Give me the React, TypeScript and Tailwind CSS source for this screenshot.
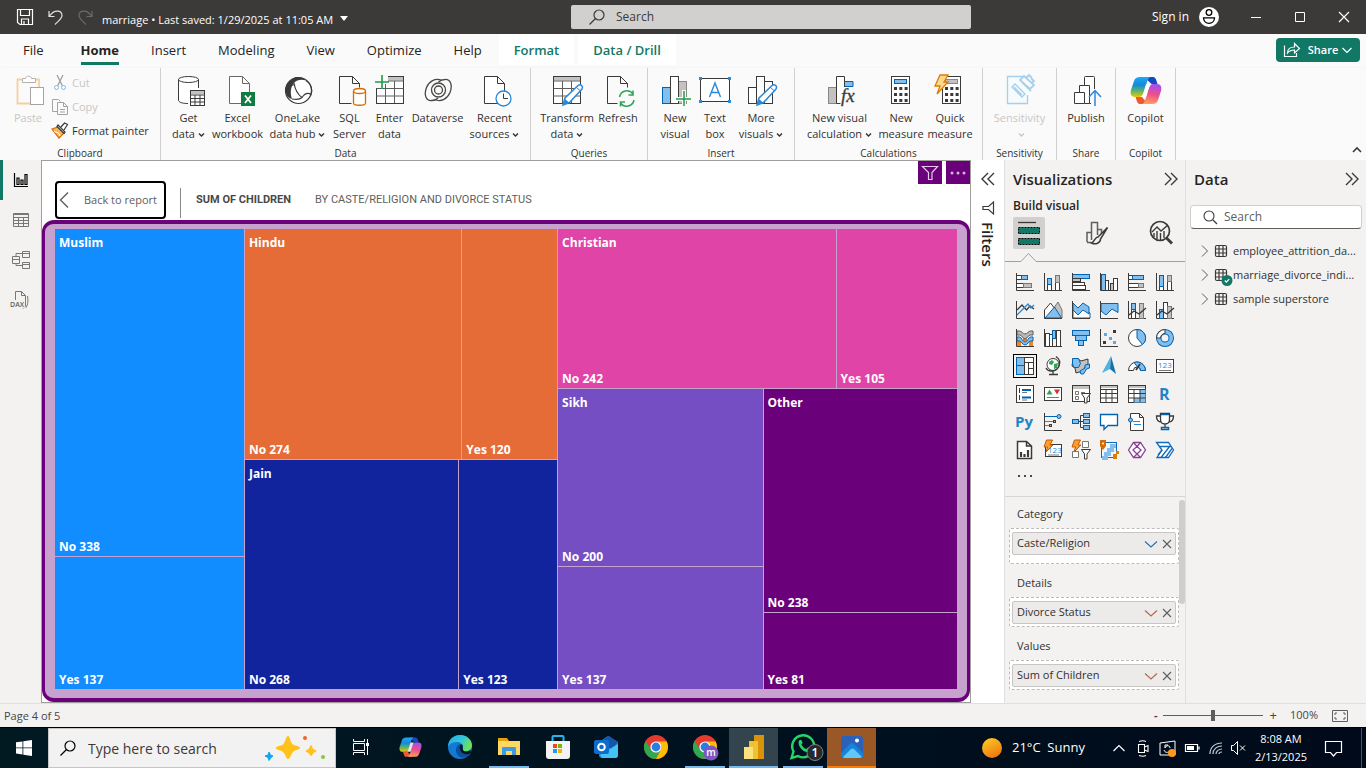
import React, { useState } from "react";
import type { ReactNode } from "react";

const INK = "#3b3a39";
const BLUE = "#83beec";
const LINE = "#0063b1";
const GRAY = "#c4c2c0";

function Icon({ size = 32, children, className = "" }: { size?: number; children: ReactNode; className?: string }) {
  return (
    <svg width={size} height={size} viewBox={`0 0 ${size} ${size}`} fill="none" stroke={INK} className={`shrink-0 overflow-visible ${className}`} aria-hidden="true">
      {children}
    </svg>
  );
}

function Box({ at, fill = "#fff", stroke = INK }: { at: [number, number, number, number]; fill?: string; stroke?: string }) {
  return <rect x={at[0]} y={at[1]} width={at[2]} height={at[3]} fill={fill} stroke={stroke} />;
}

function Chevron({ className = "" }: { className?: string }) {
  return (
    <svg width="7" height="6" viewBox="0 0 7 6" fill="none" stroke="currentColor" strokeWidth="1.4" className={`ml-[3px] inline-block ${className}`} aria-hidden="true">
      <path d="M1 1.500 3.500 4 6 1.500" />
    </svg>
  );
}

/* ---------- Ribbon icons ---------- */

const page = <path d="M5.500 1.500h13l7 7v20h-20zM18.500 1.500v7h7" fill="#fff" />;
const bigGrid = (
  <>
    <rect x="2.500" y="1.500" width="27" height="27" fill="#fff" />
    <rect x="3" y="2" width="26" height="3.500" fill={GRAY} stroke="none" />
    <path d="M2.500 6h27M2.500 13.500h27M2.500 21h27M11.500 6v22M20.500 6v22" stroke="#5f5d5b" />
  </>
);
const pencil = (
  <>
    <path d="M12 30l2-7L27 10.500c3-2 5.500 1 4 3.500L18.500 27.500z" fill="#fff" stroke="#2b88d8" strokeWidth="1.500" />
    <path d="M12 30l2-6 4 3.500z" fill="#2b88d8" stroke="none" />
    <path d="M25.500 12.500l4 3.500" stroke="#2b88d8" />
  </>
);

const ribbonIcons: Record<string, ReactNode> = {
  get: (
    <Icon>
      <path d="M5.500 4.500V25c0 2 3 3.500 8.500 3.500h11V4.500" fill="#fff" stroke="none" />
      <ellipse cx="15.500" cy="4.500" rx="10" ry="3" fill="#fff" />
      <path d="M5.500 4.500V25c0 2 3 3.500 9.500 3.500M25.500 4.500V13" />
      <rect x="17.500" y="15.500" width="14" height="15" fill="#fff" />
      <path d="M18 17.500h13" stroke={GRAY} strokeWidth="3" />
      <path d="M17.500 20h14M17.500 23.500h14M17.500 27h14M22 20v10.500M27 20v10.500" />
    </Icon>
  ),
  excel: (
    <Icon>
      <path d="M7.500 1.500h13l7 7v20h-20zM20.500 1.500v7h7" fill="#fff" stroke="#6b6967" />
      <rect x="19" y="17" width="14" height="14" fill="#107c41" stroke="none" />
      <path d="M23 20.500l6 7.500M29 20.500l-6 7.500" stroke="#fff" strokeWidth="1.800" />
    </Icon>
  ),
  onelake: (
    <Icon>
      <circle cx="16.500" cy="15.500" r="13" fill="#fff" strokeWidth="1.200" />
      <path d="M11 3.500C15 1 21 2 24 5.500c-5-1.500-9-.5-12 2.500-3.500 4-4 10-2 16-4-1-6-4-6.500-8C3 11 6 6 11 3.500z" fill={INK} stroke="none" />
      <path d="M12 8c1 6 3 11 8 14.500M24 5.500c5 3 7 9 5 14-3-2-6.500-.5-9 3M10 24c5 1 8 .5 10-1.500M5 18c1-5 4-8 7.500-8.500" strokeWidth="1.200" />
    </Icon>
  ),
  sql: (
    <Icon>
      <path d="M5.500 28.500v-27h13l7 7v4M18.500 1.500v7h7M5.500 28.500h12" fill="none" />
      <path d="M19.500 16v12c0 3 12 3 12 0V16" fill="#fff" stroke="#d86c00" strokeWidth="1.300" />
      <ellipse cx="25.500" cy="16" rx="6" ry="2.500" fill="#fff" stroke="#d86c00" strokeWidth="1.300" />
    </Icon>
  ),
  enter: (
    <Icon>
      {bigGrid}
      <path d="M0 0h14v9h-6v4H0z" fill="#fafafa" stroke="none" />
      <path d="M8 0v14M1 7h14" stroke="#1f9d49" strokeWidth="1.600" />
    </Icon>
  ),
  dataverse: (
    <Icon>
      <g stroke="#4a4846" strokeWidth="1.300">
        <path d="M20 5.500c-7-3-13 1-15.500 7-3 8 0 13.500 5 13 3 0 5-1 6.500-2.500" />
        <path d="M12.500 24.500c7 3 13-1 15.500-7 3-8 0-13.500-5-13-3 0-5 1-6.500 2.500" />
        <circle cx="16.500" cy="15" r="7" />
        <circle cx="16.500" cy="15" r="4" />
      </g>
    </Icon>
  ),
  recent: (
    <Icon>
      {page}
      <circle cx="24.500" cy="23.500" r="7.500" fill="#fff" stroke="#2b88d8" strokeWidth="1.300" />
      <path d="M24.500 18.500v5H29" />
    </Icon>
  ),
  transform: (
    <Icon>
      {bigGrid}
      {pencil}
    </Icon>
  ),
  refresh: (
    <Icon>
      <path d="M5.500 28.500v-27h13l7 7v4M18.500 1.500v7h7M5.500 28.500h10" />
      <g stroke="#31a354" strokeWidth="1.500">
        <path d="M17.500 22a7.500 7.500 0 0 1 13.500-3v-3.500M31 20h-4.500M32 25a7.500 7.500 0 0 1-13.500 3v3.500M18.500 27H23" />
      </g>
    </Icon>
  ),
  newVisual: (
    <Icon>
      <Box at={[3.500, 12.500, 8, 16]} fill={BLUE} stroke={LINE} />
      <Box at={[19.500, 6.500, 8, 22]} fill={GRAY} stroke="#8a8886" />
      <Box at={[11.500, 1.500, 8, 27]} />
      <path d="M25 15v16M17 24h15" stroke="#fafafa" strokeWidth="4" />
      <path d="M25 16v15M17 24h15" stroke="#1f9d49" strokeWidth="1.500" />
    </Icon>
  ),
  textBox: (
    <Icon>
      <Box at={[1.500, 3.500, 29, 23]} />
      <path d="M10.500 22 16 8l5.500 14M12.500 17.500h7" stroke="#2b88d8" strokeWidth="1.400" />
      <g fill="#2b88d8" stroke="none">
        <rect y="2" width="3" height="3" /><rect x="29" y="2" width="3" height="3" /><rect y="25" width="3" height="3" /><rect x="29" y="25" width="3" height="3" />
      </g>
    </Icon>
  ),
  moreVisuals: (
    <Icon>
      <Box at={[3.500, 12.500, 8, 16]} />
      <Box at={[19.500, 6.500, 8, 22]} />
      <Box at={[11.500, 1.500, 8, 27]} />
      {pencil}
    </Icon>
  ),
  calc: (
    <Icon>
      <Box at={[4.500, 12.500, 8, 16]} fill={GRAY} stroke="#8a8886" />
      <path d="M20 6.500h9v5h-9z" fill={BLUE} stroke={LINE} />
      <path d="M20.500 12V1.500h-8v27h4" fill="#fff" />
      <text x="17" y="27" fontFamily="Liberation Serif, serif" fontStyle="italic" fontSize="19" fill={INK} stroke={INK} strokeWidth=".3">fx</text>
    </Icon>
  ),
  measure: (
    <Icon>
      <Box at={[6.500, 1.500, 18, 27]} />
      <Box at={[9.500, 4.500, 12, 4]} fill={BLUE} stroke={LINE} />
      <path d="M9 13.500h14M9 19.500h14M9 25.500h14" strokeWidth="3" strokeDasharray="3 2.300" />
    </Icon>
  ),
  quick: (
    <Icon>
      <Box at={[8.500, 1.500, 18, 27]} />
      <Box at={[11.500, 4.500, 12, 4]} fill={GRAY} stroke="#8a8886" />
      <path d="M11 13.500h14M11 19.500h14M11 25.500h14" strokeWidth="3" strokeDasharray="3 2.300" />
      <path d="M6 0h8l-4 7h4L3 19l3-8H1z" fill="#ffd98a" stroke="#e07b00" strokeWidth="1.300" />
    </Icon>
  ),
  sensitivity: (
    <Icon>
      <g stroke="#a5d0ec" strokeWidth="1.300">
        <path d="M19 1.500H3.500v27h20V20" fill="#f7fbfe" />
        <path d="M8 12l3-3 10 10-3 3zM10 12l8 8" />
        <path d="M16 5l4-4 10 9-4 4zM22 3l3-3 3 3M27 8l3-2-3-3M18 7l9 9" strokeWidth="1.800" />
      </g>
    </Icon>
  ),
  publish: (
    <Icon>
      <path d="M4.500 28.500v-11h10v11zM9.500 17.500v-7h10v18h-5M14.500 10.500v-8q0-1 1-1h8q1 0 1 1V14M19.500 28.500H21" fill="#fff" />
      <path d="M25 31V16M19 22l6-6.500 6 6.500" stroke="#2b88d8" strokeWidth="1.500" />
    </Icon>
  ),
  copilot: <CopilotLogo size={32} />,
};

function CopilotLogo({ size }: { size: number }) {
  const id = `cp${size}`;
  return (
    <svg width={size} height={size} viewBox="0 0 32 32" aria-hidden="true" className="shrink-0">
      <defs>
        <linearGradient id={`${id}a`} x1="0" y1="0" x2="0" y2="1"><stop offset="0" stopColor="#1baaf2" /><stop offset=".4" stopColor="#1688dc" /><stop offset=".7" stopColor="#5bb567" /><stop offset="1" stopColor="#f6c500" /></linearGradient>
        <linearGradient id={`${id}b`} x1=".6" y1="0" x2=".4" y2="1"><stop offset="0" stopColor="#a04ff0" /><stop offset=".5" stopColor="#ee4f8c" /><stop offset="1" stopColor="#ffa15c" /></linearGradient>
      </defs>
      <path d="M14 2h9c2 0 3 2 3.500 4l1 3h-6z" fill="#1748c4" />
      <path d="M18 29H10c-2 0-3-2-3.500-4L5.500 22H12z" fill="#ec5a34" />
      <path d="M10 2h11c-2 0-3 2-4 5l-3 10c-1 3-2 5-5 5H5c-4 0-5-3-4-7L4 6c1-3 3-4 6-4z" fill={`url(#${id}a)`} />
      <path d="M22 29H11.500c2 0 3-2 4-5l3-10c1-3 2-5 5-5H27c4 0 5 3 4 7l-3 9c-1 3-3 4-6 4z" fill={`url(#${id}b)`} />
      <path d="M16 9h5c-1.500 1.500-2 4-3 7s-1 4-2 6h-5c2-2 2.500-5 3.500-8z" fill="#fff" opacity=".9" />
    </svg>
  );
}

type Command = { icon: string; lines: string[]; width: string; menu?: boolean; disabled?: boolean };
type Group = { label: string; width: string; commands: Command[] };

const groups: Group[] = [
  {
    label: "Data", width: "w-[370px]",
    commands: [
      { icon: "get", lines: ["Get", "data"], width: "w-[42px]", menu: true },
      { icon: "excel", lines: ["Excel", "workbook"], width: "w-14" },
      { icon: "onelake", lines: ["OneLake", "data hub"], width: "w-16", menu: true },
      { icon: "sql", lines: ["SQL", "Server"], width: "w-10" },
      { icon: "enter", lines: ["Enter", "data"], width: "w-10" },
      { icon: "dataverse", lines: ["Dataverse"], width: "w-14" },
      { icon: "recent", lines: ["Recent", "sources"], width: "w-[58px]", menu: true },
    ],
  },
  {
    label: "Queries", width: "w-[117px]",
    commands: [
      { icon: "transform", lines: ["Transform", "data"], width: "w-[58px]", menu: true },
      { icon: "refresh", lines: ["Refresh"], width: "w-11" },
    ],
  },
  {
    label: "Insert", width: "w-[147px]",
    commands: [
      { icon: "newVisual", lines: ["New", "visual"], width: "w-10" },
      { icon: "textBox", lines: ["Text", "box"], width: "w-10" },
      { icon: "moreVisuals", lines: ["More", "visuals"], width: "w-[52px]", menu: true },
    ],
  },
  {
    label: "Calculations", width: "w-[188px]",
    commands: [
      { icon: "calc", lines: ["New visual", "calculation"], width: "w-[74px]", menu: true },
      { icon: "measure", lines: ["New", "measure"], width: "w-[49px]" },
      { icon: "quick", lines: ["Quick", "measure"], width: "w-[49px]" },
    ],
  },
  { label: "Sensitivity", width: "w-[74px]", commands: [{ icon: "sensitivity", lines: ["Sensitivity", ""], width: "w-15", menu: true, disabled: true }] },
  { label: "Share", width: "w-[59px]", commands: [{ icon: "publish", lines: ["Publish"], width: "w-12" }] },
  { label: "Copilot", width: "w-[60px]", commands: [{ icon: "copilot", lines: ["Copilot"], width: "w-12" }] },
];

function RibbonCommand({ c }: { c: Command }) {
  return (
    <button disabled={c.disabled} className={`flex flex-col items-center ${c.width} ${c.disabled ? "text-[#c8c6c4]" : "text-[#323130]"}`}>
      {ribbonIcons[c.icon]}
      <span className="mt-[3px] flex flex-col items-center text-[11px] leading-4 whitespace-nowrap">
        {c.lines.map((line, i) => (
          <span key={i} className="h-4">
            {line}
            {c.menu && i === c.lines.length - 1 && <Chevron />}
          </span>
        ))}
      </span>
    </button>
  );
}

function RibbonGroup({ g }: { g: Group }) {
  return (
    <section className={`flex shrink-0 flex-col items-center justify-between border-r border-[#d2d0ce] pb-px ${g.width}`}>
      <div className="flex items-start pt-[7px]">
        {g.commands.map((c) => <RibbonCommand key={c.icon} c={c} />)}
      </div>
      <h2 className="text-[10px] leading-[12px] text-[#323130]">{g.label}</h2>
    </section>
  );
}

function Clipboard() {
  return (
    <section className="flex w-[161px] shrink-0 flex-col justify-between border-r border-[#d2d0ce] pb-px">
      <div className="flex pt-[3px]">
        <button disabled className="ml-[11px] flex w-[34px] flex-col items-center pt-1 text-[#c8c6c4]">
          <Icon>
            <path d="M10 4.500H5.500v24H18M24 4.500h3V12" fill="none" stroke="#f5cf9d" strokeWidth="1.800" />
            <path d="M10.500 7.500v-4h3c0-3 6-3 6 0h4v4z" fill="#fff" stroke="#b3b1af" />
            <Box at={[18.500, 12.500, 13, 17]} stroke="#a6a4a2" />
          </Icon>
          <span className="mt-[3px] text-[11px] leading-4">Paste</span>
        </button>
        <div className="ml-[7px] flex flex-col text-[11px]">
          <button disabled className="flex h-6 items-center gap-1 text-[#c8c6c4]">
            <Icon size={16}>
              <path d="M5 0l5.500 11M11 0L5.500 11" stroke="#9c9a98" strokeWidth="1.200" />
              <circle cx="4.500" cy="12.500" r="2" stroke="#83beec" /><circle cx="11.500" cy="12.500" r="2" stroke="#83beec" />
            </Icon>
            Cut
          </button>
          <button disabled className="flex h-6 items-center gap-1 text-[#c8c6c4]">
            <Icon size={16}>
              <path d="M5 12.500H.5V.5h6l2 2M5.500 3.500h6l4 4v8h-10zM11.500 3.500v4h4M8 10.500h5M8 13h5" stroke="#a6a4a2" />
            </Icon>
            Copy
          </button>
          <button className="flex h-6 items-center gap-1 whitespace-nowrap text-[#323130]">
            <Icon size={16}>
              <path d="M0 6l6-2 6 6-5 5z" fill="#fbb553" stroke="#d86c00" strokeWidth="1.200" />
              <path d="M2 8.500l4.500 1.500L8 13" stroke="#fff" />
              <path d="M5 3.500l7 7 1-1.500-7-7zM9 4l3.500-4 3 1.500L12 7" fill="#fff" strokeWidth="1.200" />
            </Icon>
            Format painter
          </button>
        </div>
      </div>
      <h2 className="text-center text-[10px] leading-[12px] text-[#323130]">Clipboard</h2>
    </section>
  );
}

/* ---------- Treemap ---------- */

type Caste = { name: string; no: number; yes: number; color: string; dir: "flex-row" | "flex-col" };
const castes: Record<string, Caste> = {
  muslim: { name: "Muslim", no: 338, yes: 137, color: "bg-[#118dff]", dir: "flex-col" },
  hindu: { name: "Hindu", no: 274, yes: 120, color: "bg-[#e66c37]", dir: "flex-row" },
  jain: { name: "Jain", no: 268, yes: 123, color: "bg-[#12239e]", dir: "flex-row" },
  christian: { name: "Christian", no: 242, yes: 105, color: "bg-[#e044a7]", dir: "flex-row" },
  sikh: { name: "Sikh", no: 200, yes: 137, color: "bg-[#744ec2]", dir: "flex-col" },
  other: { name: "Other", no: 238, yes: 81, color: "bg-[#6b007b]", dir: "flex-col" },
};
const total = (...list: Caste[]) => list.reduce((sum, c) => sum + c.no + c.yes, 0);

function Tile({ c }: { c: Caste }) {
  return (
    <div className={`flex min-h-0 min-w-0 basis-0 gap-px ${c.dir}`} style={{ flexGrow: total(c) }}>
      <div className={`flex min-h-0 min-w-0 basis-0 flex-col justify-between ${c.color}`} style={{ flexGrow: c.no }}>
        <span className="pt-[5px] pl-1">{c.name}</span>
        <span className="pl-1">No {c.no}</span>
      </div>
      <div className={`flex min-h-0 min-w-0 basis-0 flex-col justify-end ${c.color}`} style={{ flexGrow: c.yes }}>
        <span className="pl-1">Yes {c.yes}</span>
      </div>
    </div>
  );
}

function Treemap() {
  const { muslim, hindu, jain, christian, sikh, other } = castes;
  return (
    <div className="flex min-h-0 flex-1 rounded-xl border-x-[3px] border-y-4 border-[#6b007b] bg-[#c8a2cf] px-[10px] pt-[5px] pb-[9px]">
      <div className="flex min-w-0 flex-1 gap-px text-[12px] leading-[18px] font-bold whitespace-nowrap text-white">
        <div className="flex min-w-0 basis-0" style={{ flexGrow: total(muslim) }}><Tile c={muslim} /></div>
        <div className="flex min-w-0 basis-0 flex-col gap-px" style={{ flexGrow: total(hindu, jain) }}>
          <Tile c={hindu} />
          <Tile c={jain} />
        </div>
        <div className="flex min-w-0 basis-0 flex-col gap-px" style={{ flexGrow: total(christian, sikh, other) }}>
          <Tile c={christian} />
          <div className="flex min-h-0 basis-0 gap-px" style={{ flexGrow: total(sikh, other) }}>
            <Tile c={sikh} />
            <Tile c={other} />
          </div>
        </div>
      </div>
    </div>
  );
}

function Canvas() {
  return (
    <main className="flex min-w-0 flex-1 flex-col border border-[#a19f9d] bg-white">
      <div className="flex h-[59px] shrink-0 items-start">
        <button className="mt-5 ml-[13px] flex h-[38px] w-[111px] shrink-0 items-center rounded-[4px] border-2 border-black pl-[2px] text-[11px] whitespace-nowrap text-[#605e5c]">
          <Icon size={10} className="mr-[15px]"><path d="M9-2.500 1.500 5 9 12.500" stroke="#605e5c" strokeWidth="1.400" /></Icon>
          Back to report
        </button>
        <div className="mt-[27px] ml-[14px] h-[30px] w-px bg-[#8a8886]" />
        <h1 className="mt-[31px] ml-[15px] flex gap-6 font-[Roboto,sans-serif] text-[11px] leading-4 whitespace-nowrap text-[#605e5c]">
          <span className="font-bold text-[#4a4846]">SUM OF CHILDREN</span>
          <span>BY CASTE/RELIGION AND DIVORCE STATUS</span>
        </h1>
        <div className="ml-auto flex gap-1">
          <button aria-label="Filters on visual" className="flex h-[23px] w-6 items-center justify-center bg-[#6b007b]">
            <Icon size={16}><path d="M.5 1.500h15l-5.500 6v7H6.500v-7z" stroke="#e3cbe8" strokeWidth="1.200" /></Icon>
          </button>
          <button aria-label="More options" className="flex h-[23px] w-6 items-center justify-center bg-[#6b007b]">
            <svg width="16" height="4" viewBox="0 0 16 4" fill="#d5b3dc"><circle cx="2" cy="2" r="1.500" /><circle cx="8" cy="2" r="1.500" /><circle cx="14" cy="2" r="1.500" /></svg>
          </button>
        </div>
      </div>
      <Treemap />
    </main>
  );
}

/* ---------- Visualization gallery ---------- */

const axis = <path d="M.5 0v17.500H18" />;
const bolt = <path d="M2.500-1h6L6 4h3L2 11l1.500-5H0z" fill="#ff9d2e" stroke="#c25a00" />;
const funnel = <path d="M9.500 8.500h9L15 13v5h-2.500v-5z" fill="#fff" />;

const visuals: [string, ReactNode][] = [
  ["Stacked bar chart", <>{axis}<Box at={[.5, 2.500, 5, 4]} /><Box at={[5.500, 2.500, 6, 4]} fill={BLUE} stroke={LINE} /><Box at={[.5, 10.500, 7, 4]} /><Box at={[7.500, 10.500, 8, 4]} fill={GRAY} stroke="#797775" /></>],
  ["Stacked column chart", <>{axis}<Box at={[3.500, 11.500, 4, 6]} /><Box at={[3.500, 5.500, 4, 6]} fill={BLUE} stroke={LINE} /><Box at={[11.500, 9.500, 4, 8]} /><Box at={[11.500, 2.500, 4, 7]} fill={GRAY} stroke="#797775" /></>],
  ["Clustered bar chart", <><Box at={[.5, 1.500, 17, 4]} fill={BLUE} stroke={LINE} /><Box at={[.5, 5.500, 8, 3]} fill={GRAY} /><Box at={[.5, 9.500, 12, 3]} /><Box at={[.5, 12.500, 13, 4]} />{axis}</>],
  ["Clustered column chart", <><Box at={[1.500, 1.500, 4, 16]} fill={BLUE} stroke={LINE} /><Box at={[5.500, 7.500, 3, 10]} /><Box at={[10.500, 10.500, 3, 7]} fill={GRAY} /><Box at={[13.500, 5.500, 4, 12]} />{axis}</>],
  ["100% stacked bar chart", <>{axis}<Box at={[.5, 2.500, 4, 4]} /><Box at={[4.500, 2.500, 11, 4]} fill={BLUE} stroke={LINE} /><Box at={[.5, 10.500, 10, 4]} /><Box at={[10.500, 10.500, 5, 4]} fill={GRAY} stroke="#797775" /></>],
  ["100% stacked column chart", <>{axis}<Box at={[3.500, 13.500, 4, 4]} /><Box at={[3.500, 2.500, 4, 11]} fill={BLUE} stroke={LINE} /><Box at={[11.500, 8.500, 4, 9]} /><Box at={[11.500, 2.500, 4, 6]} fill={GRAY} stroke="#797775" /></>],
  ["Line chart", <>{axis}<path d="M1 9l5-5 4.500 5L14 5l4 3" strokeWidth="1.300" /><path d="M1 14l5-5 6-6 3 4 3-3" stroke="#2b88d8" strokeWidth="1.300" /></>],
  ["Area chart", <><path d="M9 8l5-7 4 8v8h-8z" fill={GRAY} stroke="#797775" /><path d="M.5 9l6-7 6 8v7H.5z" fill="#fff" /><path d="M1 17l9.500-11 7 11z" fill={BLUE} stroke={LINE} /><path d="M.5 9v8.500H18" /></>],
  ["Stacked area chart", <><path d="M1 8l5 3 5-5 7 6v5H1z" fill="#fff" stroke={LINE} /><path d="M1 2l5 5 5-5 6 4v7l-6-4-5 5-5-5z" fill={BLUE} stroke={LINE} />{axis}</>],
  ["100% stacked area chart", <><path d="M1 2.500h17v9L12 8l-6 6-5-4z" fill={BLUE} stroke={LINE} />{axis}</>],
  ["Line and stacked column chart", <>{axis}<Box at={[3.500, 8.500, 4, 9]} /><Box at={[3.500, 2.500, 4, 6]} fill={BLUE} stroke={LINE} /><Box at={[11.500, 2.500, 4, 15]} fill={GRAY} stroke="#797775" /><path d="M1 14l5-4 5 3 7-6" strokeWidth="1.400" /></>],
  ["Line and clustered column chart", <>{axis}<Box at={[3.500, 8.500, 4, 9]} fill={BLUE} stroke={LINE} /><Box at={[7.500, 1.500, 4, 16]} /><Box at={[11.500, 5.500, 4, 12]} fill={GRAY} stroke="#797775" /><path d="M1 14l5-4 5 3 7-6" strokeWidth="1.400" /></>],
  ["Ribbon chart", <><path d="M1 12h4v5H1zM13 12h4v5h-4zM7 8h4v4H7z" fill="#f58220" stroke="none" /><path d="M1 2h2.500c2 0 3.500 3 5.500 3s3.500-3 5.500-3H17v4h-2.500C12 6 11 10 9 10S6 6 3.500 6H1z" fill="#b9b7b5" stroke="#5f5d5b" /><path d="M1 8h2.500c2 0 3 5 5.500 5s3.500-5 5.500-5H17v4h-2.500c-2 0-3 4-5.500 4s-3.500-4-5.500-4H1z" fill={BLUE} stroke={LINE} />{axis}</>],
  ["Waterfall chart", <>{axis}<Box at={[1.500, 4.500, 4, 13]} /><Box at={[5.500, 5.500, 3, 12]} /><Box at={[8.500, 1.500, 3, 8]} fill={BLUE} stroke={LINE} /><Box at={[12.500, 1.500, 4, 16]} /></>],
  ["Funnel", <><Box at={[.5, 1.500, 17, 5]} fill={BLUE} stroke={LINE} /><Box at={[3.500, 6.500, 11, 5]} fill={BLUE} stroke={LINE} /><Box at={[6.500, 11.500, 5, 5]} fill={BLUE} stroke={LINE} /></>],
  ["Scatter chart", <>{axis}<path d="M3 12h3v3H3zM13 1h3v3h-3z" fill={INK} stroke="none" /><path d="M4 4h3v3H4zM9 8h3v3H9zM13 12h3v3h-3z" fill="#5ea9e0" stroke="none" /></>],
  ["Pie chart", <><circle cx="9" cy="9" r="8.500" fill="#fff" /><path d="M9 9V.5A8.500 8.500 0 0 1 14.500 15.500z" fill={BLUE} stroke={LINE} /></>],
  ["Donut chart", <><circle cx="9" cy="9" r="6.300" stroke={LINE} strokeWidth="5.500" /><circle cx="9" cy="9" r="6.300" stroke={BLUE} strokeWidth="3.500" /><path d="M.5 9A8.500 8.500 0 0 1 9 .5v4A4.500 4.500 0 0 0 4.500 9z" fill="#fff" /></>],
  ["Treemap", <><Box at={[.5, .5, 8, 8]} fill={BLUE} stroke={LINE} /><Box at={[.5, 8.500, 8, 9]} fill={BLUE} stroke={LINE} /><Box at={[8.500, .5, 9, 5]} /><Box at={[8.500, 5.500, 4, 12]} /><Box at={[12.500, 5.500, 5, 6]} /><Box at={[12.500, 11.500, 5, 6]} /></>],
  ["Map", <><circle cx="9" cy="7.500" r="6" fill="#fff" /><path d="M5 5l3-2 2 2-2 3-3-1zM10 7l4-1-1 5-3 1z" fill="#31a354" stroke="none" /><path d="M12-.5c7 5 3 15-5 14.500-3 0-4-1-5-3M9 14v3M5 17.500h9" strokeWidth="1.300" /></>],
  ["Filled map", <><path d="M1 2h5l3 2 7-2v6l-3 2-2 6-4-1-3 1-1-5-3-2z" fill={GRAY} /><path d="M.5 1.500h6l2 5-2 4H2L.5 7zM17.500 7v4l-3 1-3 5H9l-1-3 5-3V8z" fill={BLUE} stroke={LINE} /></>],
  ["Azure map", <><path d="M11-1L2 16l8-4z" fill="#4fb3e0" stroke="none" /><path d="M11-1l5 18-6-5z" fill="#1672a8" stroke="none" /></>],
  ["Gauge", <><path d="M.5 13.500a8.500 8.500 0 0 1 17 0h-5a3.500 3.500 0 0 0-7 0z" fill="#fff" /><path d="M6 5.500c6-2 11 2 11.500 8h-5c0-2-1-3.500-3-3.500z" fill={BLUE} stroke={LINE} /><path d="M8 13l4-6" strokeWidth="1.800" /></>],
  ["Card", <><Box at={[.5, 2.500, 17, 13]} /><text x="2" y="11" fontFamily="Open Sans, sans-serif" fontSize="8" fill="#2b88d8" stroke="none">123</text><path d="M3 13.500h12" stroke="#797775" /></>],
  ["Multi-row card", <><Box at={[.5, .5, 17, 17]} /><path d="M3.500 3v5M3.500 10v5" /><path d="M6 5h9M6 12.500h9" stroke={LINE} strokeWidth="1.800" /><path d="M6 7.500h5M6 15h5" stroke="#797775" /></>],
  ["KPI", <><Box at={[.5, 2.500, 17, 13]} /><path d="M2.500 9.500h6l-3-5z" fill="#31a354" stroke="none" /><path d="M10 4.500h6l-3 5z" fill="#d13438" stroke="none" /><path d="M3 12.500h12" stroke="#797775" /></>],
  ["Slicer", <><Box at={[.5, .5, 17, 16]} /><path d="M1 2.500h16" stroke={GRAY} strokeWidth="3" /><path d="M3.500 6.500h3v3h-3zM3.500 11.500h3v3h-3zM9 7.500h4" stroke="#797775" />{funnel}</>],
  ["Table", <><Box at={[.5, .5, 17, 17]} /><path d="M1 2h16" stroke={GRAY} strokeWidth="2" /><path d="M.5 4.500h17M.5 8.500h17M.5 13h17M6 4v13M12 4v13" /></>],
  ["Matrix", <><Box at={[.5, .5, 17, 17]} /><path d="M12 4h5.500v13.500H6V13h6z" fill={BLUE} stroke="none" /><path d="M1 2h16" stroke={GRAY} strokeWidth="2" /><path d="M.5 4.500h17M.5 8.500h17M.5 13h17M6 4v13M12 4v13" /></>],
  ["R script visual", <text x="3" y="15" fontFamily="Open Sans, sans-serif" fontWeight="700" fontSize="16" fill="#2284c5" stroke="none">R</text>],
  ["Python visual", <text x="-1" y="14" fontFamily="Open Sans, sans-serif" fontWeight="700" fontSize="15" fill="#2284c5" stroke="none">Py</text>],
  ["Key influencers", <>{axis}<path d="M1 3.500h12" stroke={LINE} /><path d="M1 8.500h8M1 12.500h5" stroke="#797775" /><circle cx="15" cy="3.500" r="2" fill={BLUE} stroke={LINE} /><Box at={[9.500, 7.500, 2, 2]} fill={GRAY} /><Box at={[5.500, 11.500, 2, 2]} fill={GRAY} /></>],
  ["Decomposition tree", <><path d="M6 8.500h5M8.500 2.500v12M8.500 2.500H12M8.500 14.500H12" /><Box at={[.5, 6.500, 6, 4]} fill={BLUE} stroke={LINE} /><Box at={[11.500, .5, 6, 4]} fill={BLUE} stroke={LINE} /><Box at={[11.500, 6.500, 6, 4]} fill={BLUE} stroke={LINE} /><Box at={[11.500, 12.500, 6, 4]} fill={BLUE} stroke={LINE} /></>],
  ["Q&A", <path d="M.5 1.500h17v11H8l-4 4v-4H.5z" fill="#fff" stroke={LINE} strokeWidth="1.300" />],
  ["Narrative", <><path d="M2.500.5h9l4 4v13h-13zM11.500.5v4h4" fill="#fff" /><path d="M5 8.500h7M6 11.500h7" stroke="#2b88d8" /><circle cx="2.500" cy="7" r="2" fill={BLUE} stroke={LINE} /></>],
  ["Metrics", <><path d="M4.500.5h9v6c0 6-9 6-9 0zM4.500 3H.5c0 4 2 6 5 6M13.500 3h4c0 4-2 6-5 6M9 11v4" fill="#fff" strokeWidth="1.300" /><path d="M5 1.500h8M5.500 16.500h7v-2h-7z" stroke={LINE} strokeWidth="1.500" /></>],
  ["Paginated report", <><path d="M1.500.5h9l5 4.500v12.500h-14zM10.500.5V5h5" fill="#fff" strokeWidth="1.500" /><path d="M5 16v-5M8.500 16v-3M12 16V9" strokeWidth="2.200" /></>],
  ["Card (new)", <><Box at={[1.500, 3.500, 16, 12]} /><text x="4" y="12" fontFamily="Open Sans, sans-serif" fontSize="8" fill="#2b88d8" stroke="none">123</text><path d="M4 14h11" stroke="#797775" />{bolt}</>],
  ["Slicer (new)", <><path d="M10.500.5h6v6h-6zM.5 10.500h6v6h-6z" fill="#fff" stroke="#797775" />{funnel}{bolt}</>],
  ["ArcGIS", <><Box at={[1.500, 1.500, 15, 15]} fill="#eef7fd" stroke="#0f6cbd" /><path d="M16 5h-4v4H9v4H6v4H2" stroke={BLUE} strokeWidth="4" /><path d="M0-1h6v6l-3 4-3-4z" fill="#d86c00" stroke="none" /><circle cx="3" cy="2.500" r="1" fill="#fff" stroke="none" /><path d="M13 13h4v5h-4zM16 10h3v3h-3z" fill="#e07b00" stroke="none" /></>],
  ["Power Apps", <g stroke="#8a3f96" strokeWidth="1.300"><path d="M.5 9L5.500 1.500h7l5 7.500-5 7.500h-7z" fill="#fff" /><path d="M5.500 1.500L9 5.500 5 9l4 4-3.500 3.500M12.500 1.500L9 5.500 13 9l-4 4 3.500 3.500M9 5.500" /></g>],
  ["Power Automate", <g stroke="#0f6cbd" strokeWidth="1.300"><path d="M.5 1.500h12l5 7.500-5 7.500H1L6 9z" fill="#fff" /><path d="M3 5.500h12M5 16.500l9-11.500M9.500 16.500l6.500-9M2 14l4-5" /></g>],
];

function Wells({ label, field, tall }: { label: string; field: string; tall?: boolean }) {
  return (
    <section className="text-[11px] text-[#323130]">
      <h3 className="pl-2 leading-[28px]">{label}</h3>
      <div className={`rounded-[2px] border border-dashed border-[#bdbbb9] bg-white p-[2px] pt-[3px] ${tall ? "h-9" : "h-[30px]"}`}>
        <div className="flex h-[23px] items-center rounded-[2px] border border-[#c8c6c4] bg-[#edebe9] pr-[3px] pl-1">
          <span className="flex-1">{field}</span>
          <button aria-label={`${field} options`}><Icon size={14} className="mr-1"><path d="M1 4.500l6 5.500 6-5.500" stroke={tall ? "#2b6cb0" : "#b5654a"} strokeWidth="1.100" /></Icon></button>
          <button aria-label={`Remove ${field}`}><Icon size={10}><path d="M1 1l8 8M9 1L1 9" stroke="#605e5c" strokeWidth="1.100" /></Icon></button>
        </div>
      </div>
    </section>
  );
}

function Collapse({ left = false, label }: { left?: boolean; label: string }) {
  return (
    <button aria-label={label}>
      <Icon size={14}><path d={left ? "M7 1 1 7l6 6M13 1 7 7l6 6" : "M1 1l6 6-6 6M7 1l6 6-6 6"} strokeWidth="1.400" /></Icon>
    </button>
  );
}

function Visualizations() {
  return (
    <aside className="flex w-[182px] shrink-0 flex-col border-x border-[#e1dfdd] bg-[#f3f2f1]">
      <header className="flex h-[38px] items-center justify-between pr-[7px] pl-2">
        <h2 className="text-[15px] font-semibold text-[#252423]">Visualizations</h2>
        <Collapse label="Collapse visualizations" />
      </header>
      <h3 className="pl-2 text-[12px] leading-4 font-semibold text-[#252423]">Build visual</h3>
      <div className="mt-[3px] flex items-center justify-between pr-3 pl-2">
        <button aria-label="Build visual" className="flex size-8 items-center justify-center rounded-[2px] bg-[#d2d0ce]">
          <Icon size={24}>
            <path d="M1 1.500h18" strokeWidth="1.300" />
            <path d="M1.500 6.500h21v6h-21zM1.500 17.500h21v6h-21z" fill="#117865" strokeDasharray="2 1" stroke="#000" />
          </Icon>
        </button>
        <button aria-label="Format visual">
          <Icon size={24}>
            <path d="M2 21v-9.500h4.500V1.500h6v7h4v5M2 21.500h4M6.500 11v8M12.500 8v6" stroke="#605e5c" strokeWidth="1.500" />
            <path d="M22.500 6.500L13 16c-3 0-3 4-6.500 6 4 2 9 0 9-4z" fill="#f3f2f1" strokeWidth="1.500" />
          </Icon>
        </button>
        <button aria-label="Analytics">
          <Icon size={24}>
            <circle cx="11" cy="10" r="9.500" strokeWidth="1.700" />
            <path d="M3 11l5-5 4 4 7-6M5 12v4M8 10v8M11.500 12v7M15 10v7" strokeWidth="1.400" />
            <path d="M17 16.500l6 6" strokeWidth="2.800" />
          </Icon>
        </button>
      </div>
      <svg width="180" height="14" viewBox="0 0 180 14" fill="none" stroke="#a19f9d" aria-hidden="true"><path d="M0 12.500h16l7.500-8 7.500 8h149" /></svg>
      <div className="grid grid-cols-6 self-start pt-[5px] pl-[6px]">
        {visuals.map(([name, art]) => (
          <button key={name} aria-label={name} className="flex size-7 items-center justify-center">
            <span className={`flex size-6 items-center justify-center ${name === "Treemap" ? "border border-black" : ""}`}>
              <Icon size={18}>{art}</Icon>
            </span>
          </button>
        ))}
        <button aria-label="More visuals" className="flex h-6 w-7 items-center justify-center">
          <svg width="16" height="2" viewBox="0 0 16 2" fill="#4a4846"><path d="M1 0h2v2H1zM7 0h2v2H7zM13 0h2v2h-2z" /></svg>
        </button>
      </div>
      <div className="mt-2 flex flex-1 items-start justify-between border-t border-[#d8d6d4] pl-1">
        <div className="flex w-[170px] flex-col gap-[5px] pt-[3px]">
          <Wells label="Category" field="Caste/Religion" tall />
          <Wells label="Details" field="Divorce Status" />
          <Wells label="Values" field="Sum of Children" />
        </div>
        <div className="mt-[3px] h-[104px] w-[6px] rounded-full bg-[#d0cecc]" />
      </div>
    </aside>
  );
}

function DataPane() {
  const tables = ["employee_attrition_da...", "marriage_divorce_indi...", "sample superstore"];
  return (
    <aside className="flex w-[180px] shrink-0 flex-col bg-[#f3f2f1]">
      <header className="flex h-[38px] items-center justify-between pr-[7px] pl-2">
        <h2 className="text-[15px] font-semibold text-[#252423]">Data</h2>
        <Collapse label="Collapse data pane" />
      </header>
      <label className="mt-[7px] mr-1 ml-1 flex h-6 items-center gap-[7px] rounded-[4px] border border-[#d2d0ce] border-b-[#605e5c] bg-white pl-3">
        <Icon size={14}><circle cx="6" cy="6" r="5" strokeWidth="1.100" /><path d="M10 10l4 4" strokeWidth="1.300" /></Icon>
        <input aria-label="Search data" placeholder="Search" className="w-full min-w-0 bg-transparent text-[12px] text-[#323130] outline-none placeholder:text-[#605e5c]" />
      </label>
      <ul className="mt-[10px] text-[11px] text-[#323130]">
        {tables.map((t, i) => (
          <li key={t}>
            <button className="flex h-6 w-full items-center pl-[15px] whitespace-nowrap">
              <Icon size={10} className="mr-1"><path d="M1-.5L6.500 5 1 10.500" stroke="#605e5c" /></Icon>
              <Icon size={12} className="mr-[6px]">
                <rect x=".5" y=".5" width="11" height="11" rx="1.500" strokeWidth="1.200" />
                <path d="M4 .5v11M8 .5v11M.5 4h11M.5 8h11" strokeWidth="1.200" />
                {i === 1 && <><circle cx="12" cy="11.500" r="5.500" fill="#117865" stroke="none" /><path d="M9.800 11.500l1.600 1.600 2.800-3" stroke="#fff" strokeWidth="1.200" /></>}
              </Icon>
              {t}
            </button>
          </li>
        ))}
      </ul>
    </aside>
  );
}

/* ---------- Window frame ---------- */

function TitleBar() {
  return (
    <header className="flex h-[34px] shrink-0 items-center bg-[#3b3a39] text-[12px] text-white">
      <div className="flex flex-1 items-center">
        <button aria-label="Save" className="ml-[17px]"><Icon size={16}><path d="M.5.500h15v15H3l-2.500-2zM3.500.5v6h9v-6M4.500 15v-5h7v5M7 12v3" stroke="#fff" strokeWidth="1.200" /></Icon></button>
        <button aria-label="Undo" className="ml-[15px]"><Icon size={15}><path d="M1 1v5.500h5.500M1.500 6C6-1 14 0 14 5.500c0 3-3 5-7 9" stroke="#e1dfdd" strokeWidth="1.200" /></Icon></button>
        <button aria-label="Redo" disabled className="ml-[15px]"><Icon size={15}><path d="M14 1v5.500H8.500M13.500 6C9-1 1 0 1 5.500c0 3 3 5 7 9" stroke="#6d6b69" strokeWidth="1.200" /></Icon></button>
        <button className="mt-[6px] ml-[9px] flex items-center gap-[7px] text-[11px] whitespace-nowrap">
          marriage • Last saved: 1/29/2025 at 11:05 AM
          <svg width="8" height="5" viewBox="0 0 8 5" fill="#fff" className="mb-1"><path d="M0 0h8L4 5z" /></svg>
        </button>
      </div>
      <label className="flex h-6 w-[400px] shrink-0 items-center gap-[11px] rounded-[2px] bg-[#d2d0ce] pl-[18px]">
        <Icon size={16}><circle cx="10" cy="6" r="5" strokeWidth="1.200" /><path d="M6.500 9.500L.5 15.500" strokeWidth="1.200" /></Icon>
        <input aria-label="Search" placeholder="Search" className="w-full bg-transparent text-[12px] text-[#323130] outline-none placeholder:text-[#3b3a39]" />
      </label>
      <div className="flex w-[395px] shrink-0 items-center justify-end">
        <button className="flex items-center gap-[10px]">
          Sign in
          <Icon size={20}><circle cx="10" cy="10" r="10" fill="#fff" stroke="none" /><circle cx="10" cy="5.500" r="2.800" stroke="#000" strokeWidth="1.300" /><path d="M4.500 10.800h11c0 3.500-2.500 5.500-5.500 5.500s-5.500-2-5.500-5.500z" stroke="#000" strokeWidth="1.300" /></Icon>
        </button>
        <button aria-label="Minimize" className="ml-8"><Icon size={10}><path d="M0 5.500h10" stroke="#fff" /></Icon></button>
        <button aria-label="Maximize" className="ml-[34px]"><Icon size={10}><path d="M.5.500h9v9h-9z" stroke="#fff" /></Icon></button>
        <button aria-label="Close" className="mr-[17px] ml-[34px]"><Icon size={10}><path d="M0 0l10 10M10 0L0 10" stroke="#fff" strokeWidth="1.200" /></Icon></button>
      </div>
    </header>
  );
}

function Tabs() {
  const plain = ["Insert", "Modeling", "View", "Optimize", "Help"];
  return (
    <nav className="flex h-[34px] shrink-0 items-start bg-[#fafafa] text-[13px] text-[#252423]">
      <button className="h-[33px] pr-[19px] pl-[23px]">File</button>
      <button className="flex h-[31px] flex-col justify-between pt-[7px] pr-4 pl-[18px] font-bold"><span className="leading-[18px]">Home</span><span className="h-[3px] w-full bg-[#117865]" /></button>
      {plain.map((t) => <button key={t} className="h-[33px] px-4">{t}</button>)}
      <button className="ml-px h-[31px] bg-white px-[15px] pt-[2px] font-semibold text-[#117865]">Format</button>
      <button className="ml-1 h-[31px] bg-white px-[15px] pt-[2px] font-semibold text-[#117865]">Data / Drill</button>
      <button className="mt-1 mr-[6px] ml-auto flex h-6 w-[84px] items-center justify-center rounded-[4px] bg-[#117865] text-[11px] font-semibold text-white">
        <Icon size={16} className="mr-2"><path d="M.5 3.500v11h12V11M3.500 11c0-4 3-6 7-6V1.500l5 5-5 4.500V8c-3 0-5 .5-7 3z" stroke="#fff" strokeWidth="1.200" /></Icon>
        Share
        <Icon size={10} className="ml-1"><path d="M.5 3L5 7.500 9.500 3" stroke="#fff" strokeWidth="1.200" /></Icon>
      </button>
    </nav>
  );
}

function Rail() {
  return (
    <nav className="flex w-[41px] shrink-0 flex-col bg-[#f3f2f1]">
      <button aria-label="Report view" className="flex h-10 items-center border-l-[3px] border-[#117865] pl-[11px]">
        <Icon size={14}><path d="M.5 0v13.500H14" stroke="#000" strokeWidth="1.200" /><path d="M3 5h2v6.500H3zM7 7h2v4.500H7zM11 1.500h2v10h-2z" stroke="#000" strokeWidth="1.200" /></Icon>
      </button>
      <button aria-label="Table view" className="flex h-10 items-center pl-[13px]">
        <Icon size={16}><path d="M.5 1.500h15v13H.5zM.5 5.500h15M.5 8.500h15M.5 11.500h15M5.500 5v9M10.500 5v9" stroke="#797775" /><path d="M.5 2.500h15" stroke="#797775" /></Icon>
      </button>
      <button aria-label="Model view" className="flex h-10 items-center pl-3">
        <Icon size={18}><path d="M.5 5.500h7v7h-7zM.5 8.500h7M10.500.5h7v6h-7zM10.500 2.500h7M10.500 11.500h7v6h-7zM10.500 13.500h7M4 5.500v-3h6M4 12.500v2h6" stroke="#797775" /></Icon>
      </button>
      <button aria-label="DAX query view" className="flex h-10 items-center pl-3">
        <Icon size={18}>
          <path d="M3.500 9V.5h6l4 4V14c0 2-1 3-3 3M9.500.5v4h4M15.500 5c1 6 0 10-2 12" stroke="#797775" />
          <text x="-2" y="16" fontFamily="Open Sans, sans-serif" fontWeight="600" fontSize="7" fill="#605e5c" stroke="#f3f2f1" strokeWidth="1.500" paintOrder="stroke">DAX</text>
        </Icon>
      </button>
    </nav>
  );
}

function StatusBar() {
  const [zoom, setZoom] = useState(50);
  return (
    <footer className="flex h-6 shrink-0 items-center border-t border-[#e1dfdd] bg-[#f3f2f1] px-1 text-[11px] text-[#484644]">
      <span className="flex-1 pt-[2px]">Page 4 of 5</span>
      <button aria-label="Zoom out" className="mr-[5px] font-bold">-</button>
      <input
        type="range" aria-label="Zoom" value={zoom} onChange={(e) => setZoom(Number(e.target.value))}
        className="h-[11px] w-[100px] appearance-none bg-[linear-gradient(#605e5c,#605e5c)] bg-[length:100%_1px] bg-center bg-no-repeat [&::-webkit-slider-thumb]:h-[11px] [&::-webkit-slider-thumb]:w-1 [&::-webkit-slider-thumb]:appearance-none [&::-webkit-slider-thumb]:bg-[#605e5c]"
      />
      <button aria-label="Zoom in" className="ml-[7px] text-[13px]">+</button>
      <span className="ml-[13px]">100%</span>
      <button aria-label="Fit to page" className="mr-[14px] ml-[14px]"><svg width="16" height="12" viewBox="0 0 16 12" fill="none" stroke="#605e5c"><path d="M.5.500h15v11H.5zM3 5V3h2M11 3h2v2M13 7v2h-2M5 9H3V7" /></svg></button>
    </footer>
  );
}

/* ---------- Windows taskbar ---------- */

function ChromeLogo({ badge }: { badge?: boolean }) {
  return (
    <svg width="28" height="28" viewBox="-2 -2 28 28" aria-hidden="true">
      <circle cx="12" cy="12" r="12" fill="#e33b2e" />
      <path d="M1.600 6L7.200 14.800A5.500 5.500 0 0 0 16.800 14.800L12 24A12 12 0 0 1 1.600 6Z" fill="#2da94f" />
      <path d="M12 6.500H22.700A12 12 0 0 1 12 24L16.800 14.800A5.500 5.500 0 0 0 12 6.500Z" fill="#fdbd00" />
      <circle cx="12" cy="12" r="5.600" fill="#fff" /><circle cx="12" cy="12" r="4.400" fill="#2a7de1" />
      {badge && <><circle cx="18" cy="18" r="7.500" fill="#7e57c2" /><text x="18" y="21" textAnchor="middle" fontFamily="Open Sans, sans-serif" fontWeight="600" fontSize="10" fill="#fff">m</text></>}
    </svg>
  );
}

const apps: { name: string; art: ReactNode; bar?: string; bg?: string }[] = [
  { name: "Task View", art: <svg width="18" height="16" viewBox="0 0 18 16" fill="none" stroke="#fff"><path d="M.5 0v2.500h11V0M.5 4.500h11v7H.5zM.5 16v-2.500h11V16M14.500 0v16" /><path d="M13 4h3v3h-3z" fill="#fff" stroke="none" /></svg> },
  { name: "Copilot", art: <CopilotLogo size={23} /> },
  { name: "Edge", art: (
    <svg width="24" height="24" viewBox="0 0 24 24">
      <defs><linearGradient id="edgeTop" x1="0" y1="0" x2="1" y2=".4"><stop offset="0" stopColor="#25a8e8" /><stop offset=".6" stopColor="#32c8d8" /><stop offset="1" stopColor="#6de05b" /></linearGradient></defs>
      <circle cx="12" cy="12" r="12" fill="#1479d3" />
      <path d="M0 12C0 4 6 0 12 0c7 0 12 5 12 10 0 4-3 6-6 6-4 0-3-2-3-4 0-3-3-5-6-5-5 0-9 3-9 5z" fill="url(#edgeTop)" />
      <path d="M8 15c0-4 3-6 5-6 2 1 2 3 1.500 4.500C14 16 16 18 21 16.500L23 18c-2 4-6 5-9 4.500-4-.5-6-4-6-7.500z" fill="#0b4f9e" />
      <path d="M12 14c-1-3 1-5 2-4.500 1 1 .5 3 .5 4 0 3 4 4.500 8 1.500l.500 3C17 21 13 18 12 14z" fill="#011620" />
    </svg>) },
  { name: "File Explorer", bar: "bg-[#76b9ed]", art: (
    <svg width="22" height="20" viewBox="0 0 22 20"><path d="M0 1h9l2 3h11v4H0z" fill="#e5a00d" /><path d="M0 4h22v14H0z" fill="#ffd763" /><path d="M4 18v-7q0-1 1-1h12q1 0 1 1v7h-4v-4H8v4z" fill="#3f9bdc" /></svg>) },
  { name: "Microsoft Store", art: (
    <svg width="24" height="24" viewBox="0 0 24 24"><path d="M6.500 8V2q0-1 1-1h9q1 0 1 1v6" fill="none" stroke="#27b5ea" strokeWidth="2" /><path d="M0 6h24v15q0 3-3 3H3q-3 0-3-3z" fill="#f3f3f3" /><path d="M7 9h4v4H7z" fill="#e74c25" /><path d="M12 9h4v4h-4z" fill="#7db700" /><path d="M7 14h4v4H7z" fill="#1f9ee5" /><path d="M12 14h4v4h-4z" fill="#f8b500" /></svg>) },
  { name: "Outlook", art: (
    <svg width="25" height="24" viewBox="0 0 25 24"><path d="M5 7l9-6 10 6v13q0 3-3 3H8q-3 0-3-3z" fill="#1b7fd6" /><path d="M5 8l10-7 9 6-6 7z" fill="#1456a8" /><path d="M24 9v11q0 3-3 3H8l-2-3z" fill="#43c2f3" /><rect y="5" width="15" height="14" rx="2" fill="#0f6ccf" /><circle cx="7.500" cy="12" r="3.300" fill="none" stroke="#fff" strokeWidth="2" /></svg>) },
  { name: "Chrome", art: <ChromeLogo /> },
  { name: "Chrome profile", bar: "bg-[#76b9ed]", art: <ChromeLogo badge /> },
  { name: "Power BI", bar: "bg-[#76b9ed]", bg: "bg-[#33444e]", art: (
    <svg width="20" height="24" viewBox="0 0 20 24"><path d="M10 0h10v24H10z" fill="#d9930b" /><path d="M5 6h9v18H5z" fill="#f0c131" /><path d="M0 12h9v12H0z" fill="#fbe27d" /></svg>) },
  { name: "WhatsApp", bar: "bg-[#76b9ed]", art: (
    <svg width="48" height="28" viewBox="-11 0 48 28"><path d="M1.500 25l2-6.500A11 11 0 1 1 8 23z" fill="none" stroke="#25d366" strokeWidth="2.400" /><path d="M9 7.500c2-2 3 0 3.500 2 0 1-1 1.500-1 2 1 2 2.500 3.500 4.500 4.500 1 0 1.500-2 2.500-1.500 3 1.500 2.500 2 1 4-5 3-13-6-10.500-11z" fill="#25d366" /><circle cx="25" cy="19.500" r="8" fill="#252a2c" stroke="#7b8083" /><text x="25" y="24" textAnchor="middle" fontFamily="Open Sans, sans-serif" fontWeight="600" fontSize="12" fill="#fff">1</text></svg>) },
  { name: "Photos", bar: "bg-[#ff7b00]", bg: "bg-[#995826]", art: (
    <svg width="22" height="22" viewBox="0 0 22 22"><rect width="22" height="22" rx="3" fill="#2b62b8" /><path d="M0 17l9-9q2-1.500 4 0l9 9v2q0 3-3 3H3q-3 0-3-3z" fill="#1583dc" /><path d="M2 21l8-8q1.500-1 3 0l8 8-2 1H3z" fill="#5fc9f8" /><circle cx="16" cy="4.500" r="2" fill="#fff" /></svg>) },
];

function Taskbar() {
  return (
    <footer className="flex h-[41px] shrink-0 items-stretch border-t border-black bg-linear-to-r from-[#011a22] via-[#00121f] to-[#000a1a] text-white">
      <button aria-label="Start" className="flex w-12 items-center justify-center">
        <svg width="16" height="16" viewBox="0 0 16 16" fill="#fff"><path d="M0 2.300l6.500-.9v6.100H0zM7.300 1.200L16 0v7.500H7.300zM0 8.300h6.500v6.200L0 13.600zM7.300 8.300H16V16l-8.700-1.200z" /></svg>
      </button>
      <label className="mr-px flex w-72 shrink-0 items-center border border-[#c8c6c4] bg-[#f3f2f2] pl-[11px]">
        <Icon size={16} className="mr-3"><circle cx="10" cy="6" r="5" stroke="#000" strokeWidth="1.200" /><path d="M6.500 9.500L.5 15.500" stroke="#000" strokeWidth="1.300" /></Icon>
        <input aria-label="Type here to search" placeholder="Type here to search" className="w-full min-w-0 bg-transparent text-[14px] text-[#323130] outline-none placeholder:text-[#3b3a39]" />
        <svg width="62" height="26" viewBox="0 0 62 26" className="mr-[9px] shrink-0">
          <path d="M24 1c2 0 2.500 7 5 8.500S36 11 36 13s-5 1.500-7 4-3 7-5 7-2.500-5-5-7-7-2-7-4 5-2 7-3.500S22 1 24 1z" fill="#ffc21a" />
          <path d="M47 10c1 0 1 3 2.500 4s3 1 3 2-2 1-3 2-1.500 3-2.500 3-1-2-2.500-3-3-1-3-2 2-1 3-2 1.500-4 2.500-4z" fill="#ffc21a" />
          <path d="M5 17l1.500 3L9 21l-2 1.500-2 3-1-3-3-1.500 3-1z" fill="#12a5ee" stroke="#12a5ee" />
          <circle cx="41" cy="3" r="2" fill="#f2622b" /><circle cx="59" cy="22" r="2" fill="#8bc63f" />
        </svg>
      </label>
      {apps.map((a) => (
        <button key={a.name} aria-label={a.name} className={`flex w-[49px] shrink-0 flex-col items-center ${a.bg ?? ""}`}>
          <span className="flex flex-1 items-center">{a.art}</span>
          <span className={`h-[2px] ${a.bg ? "w-full" : "w-10"} ${a.bar ?? ""}`} />
        </button>
      ))}
      <div className="ml-auto flex items-center">
        <button className="flex items-center gap-[10px] text-[13px] whitespace-pre">
          <svg width="20" height="20" viewBox="0 0 20 20"><defs><linearGradient id="sun" x1=".2" y1="0" x2=".7" y2="1"><stop offset="0" stopColor="#ffc823" /><stop offset="1" stopColor="#ee7410" /></linearGradient></defs><circle cx="10" cy="10" r="10" fill="url(#sun)" /></svg>
          {"21°C  Sunny"}
        </button>
        <button aria-label="Show hidden icons" className="ml-7"><Icon size={12}><path d="M.5 9L6 3.500 11.500 9" stroke="#fff" strokeWidth="1.200" /></Icon></button>
        <button aria-label="Meet Now" className="ml-3"><Icon size={12}><path d="M1.500 2.500h6v8h-6zM7.500 5l3.500-1.500v6L7.500 8M2-.5q4-1.500 7 0M2 13.500q4 1.500 7 0" stroke="#fff" strokeWidth="1.100" /></Icon></button>
        <button aria-label="Sync" className="ml-[10px]"><Icon size={17}><path d="M1 3l15-2v14H1zM9 5H6v3M6 8c1-3 5-3 5 0M5 10c1 3 4 3 6 1" stroke="#fff" /><circle cx="13" cy="13" r="4" fill="#ff9a1a" stroke="none" /></Icon></button>
        <button aria-label="Battery" className="ml-2"><Icon size={16}><path d="M1.500 4.500h12v7h-12zM15 6.500v3" stroke="#fff" strokeWidth="1.200" /><path d="M3 6h7v4H3z" fill="#fff" stroke="none" /></Icon></button>
        <button aria-label="Network" className="ml-[9px]"><Icon size={14}><path d="M1 13C1 6 6 2 13 2M4 13c0-5 4-8 9-8M7 13c0-3 3-5 6-5M10 13c0-1 1-2 3-2" stroke="#c7ccd0" strokeWidth="1.200" /></Icon></button>
        <button aria-label="Volume muted" className="ml-[7px]"><Icon size={16}><path d="M1.500 5.500h2l4-4v13l-4-4h-2zM10 5.500l5 5M15 5.500l-5 5" stroke="#fff" /></Icon></button>
        <time className="ml-[9px] text-center text-[11px] leading-[18px]"><span className="block">8:08 AM</span><span className="block">2/13/2025</span></time>
        <button aria-label="Notifications" className="ml-[18px]"><Icon size={17}><path d="M.5 1.500h16v11h-5L8.500 16l-3-3.500h-5z" stroke="#fff" strokeWidth="1.200" /></Icon></button>
        <span className="mr-1 ml-[19px] h-10 w-px bg-[#4b5560]" />
      </div>
    </footer>
  );
}

export default function App() {
  return (
    <div className="flex h-screen min-h-[700px] flex-col overflow-hidden bg-[#f3f2f1] font-['Open_Sans','Noto_Sans',sans-serif]">
      <TitleBar />
      <Tabs />
      <div className="flex h-[92px] shrink-0 bg-[#fafafa] shadow-sm">
        <Clipboard />
        {groups.map((g) => <RibbonGroup key={g.label} g={g} />)}
        <button aria-label="Collapse ribbon" className="mr-1 mb-[5px] ml-auto self-end"><Icon size={10}><path d="M1 7l4-4 4 4" strokeWidth="1.600" /></Icon></button>
      </div>
      <div className="flex min-h-0 flex-1">
        <Rail />
        <Canvas />
        <aside className="flex w-[33px] shrink-0 flex-col items-center bg-white pt-3">
          <Collapse left label="Expand filters" />
          <Icon size={12} className="mt-4"><path d="M11.500 0v12L6.500 7.500H1v-3h5.500z" strokeWidth="1.200" /></Icon>
          <h2 className="mt-2 text-[15px] leading-[18px] font-semibold text-[#252423] [writing-mode:vertical-rl]">Filters</h2>
        </aside>
        <Visualizations />
        <DataPane />
      </div>
      <StatusBar />
      <Taskbar />
    </div>
  );
}
